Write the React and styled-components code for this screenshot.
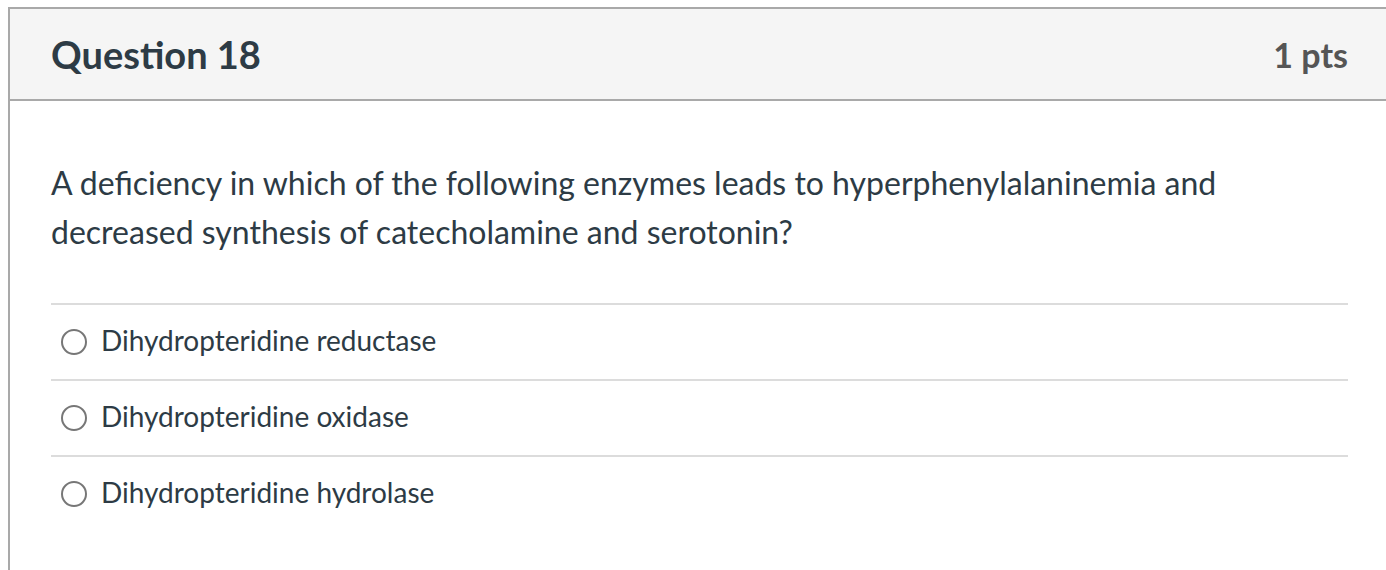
import React from "react";
import styled, { createGlobalStyle } from "styled-components";

const Global = createGlobalStyle`
  html, body { margin: 0; padding: 0; background: #fff; overflow: hidden; }
  body { font-family: Lato, "Open Sans", sans-serif; color: #2d3b45; }
`;

const Page = styled.div`
  padding: 7px 0 0 8px;
  width: 1386px;
  height: 570px;
  box-sizing: border-box;
  overflow: hidden;
`;

const Card = styled.div`
  width: 1400px;
  border: 2px solid #a9a9a9;
  border-right: none;
  border-bottom: none;
  min-height: 600px;
  box-sizing: border-box;
`;

const Header = styled.div`
  display: flex;
  align-items: center;
  justify-content: space-between;
  height: 90px;
  padding: 0 60px 0 41px;
  background: #f5f5f5;
  border-bottom: 2px solid #a9a9a9;
`;

const Title = styled.h2`
  margin: 0;
  font-size: 38px;
  font-weight: 700;
  color: #2d3b45;
`;

const Points = styled.div`
  font-size: 34px;
  font-weight: 700;
  color: #555;
`;

const Body = styled.div`
  padding: 57px 60px 0 41px;
`;

const QuestionText = styled.p`
  margin: 0 0 47px;
  font-size: 32px;
  line-height: 49px;
  color: #2d3b45;
`;

const Answers = styled.div`
  display: flex;
  flex-direction: column;
`;

const Answer = styled.label`
  display: flex;
  align-items: center;
  gap: 14px;
  height: 74px;
  box-sizing: content-box;
  padding: 0 0 0 10px;
  border-top: 2px solid #dcdcdc;
  font-size: 28px;
  color: #2d3b45;
`;

const AnswerInner = styled.span`
  display: flex;
  align-items: center;
  gap: 14px;
  margin-top: -5px;
`;

const Radio = styled.span`
  width: 22px;
  height: 22px;
  border: 2px solid #777;
  border-radius: 50%;
  flex: none;
  margin-top: 4px;
`;

const options = [
  "Dihydropteridine reductase",
  "Dihydropteridine oxidase",
  "Dihydropteridine hydrolase",
];

export default function App() {
  return (
    <>
      <Global />
      <Page>
        <Card>
          <Header>
            <Title>Question 18</Title>
            <Points>1 pts</Points>
          </Header>
          <Body>
            <QuestionText>
              A deficiency in which of the following enzymes leads to hyperphenylalaninemia and
              <br />
              decreased synthesis of catecholamine and serotonin?
            </QuestionText>
            <Answers>
              {options.map((o) => (
                <Answer key={o}>
                  <AnswerInner>
                    <Radio />
                    {o}
                  </AnswerInner>
                </Answer>
              ))}
            </Answers>
          </Body>
        </Card>
      </Page>
    </>
  );
}
